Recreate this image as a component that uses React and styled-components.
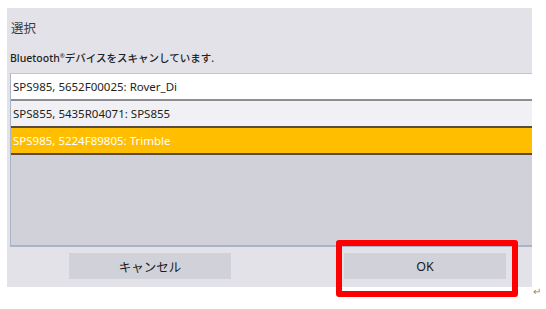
import React from "react";
import styled, { createGlobalStyle } from "styled-components";

const GlobalStyle = createGlobalStyle`
  html, body { margin: 0; padding: 0; background: #ffffff; }
  body { font-family: "Noto Sans", "Noto Sans CJK JP", sans-serif; }
`;

const Page = styled.div`
  position: relative;
  display: flex;
  align-items: flex-start;
  padding: 8px 0 0 7px;
  width: 546px;
  height: 309px;
  box-sizing: border-box;
`;

const Panel = styled.div`
  width: 525px;
  height: 279px;
  background: #e2e2e8;
  display: flex;
  flex-direction: column;
`;

const Title = styled.div`
  padding: 12px 0 0 4px;
  font-size: 12.5px;
  line-height: 17px;
  color: #3a3a3a;
`;

const Subtitle = styled.div`
  margin-top: 12px;
  padding-left: 3px;
  font-size: 10.5px;
  font-weight: 500;
  line-height: 15px;
  color: #222;
`;

const Sup = styled.sup`
  font-size: 6px;
  vertical-align: 4px;
`;

const List = styled.div`
  margin: 7px 0 0 3px;
  flex: 1;
  background: #d1d1d9;
  border-top: 1px solid #c4c4cc;
  border-left: 1px solid #a9b4c6;
  border-bottom: 2px solid #aab4c6;
  display: flex;
  flex-direction: column;
`;

const Row = styled.div`
  height: 25px;
  display: flex;
  align-items: center;
  padding-left: 2px;
  font-size: 11.5px;
  color: ${(p) => (p.$selected ? "#ffffff" : "#1e1e1e")};
  background: ${(p) => (p.$selected ? "#ffbe00" : p.$alt ? "#f1f1f5" : "#ffffff")};
  border-top: ${(p) => (p.$selected ? "2px solid #5a4c3c" : "0")};
  border-bottom: 2px solid ${(p) => (p.$selected ? "#5a4c3c" : "#8e8e92")};
  box-sizing: content-box;
  margin-top: ${(p) => (p.$selected ? "-2px" : "0")};
`;

const Footer = styled.div`
  height: 40px;
  display: flex;
  align-items: flex-start;
  padding: 6px 0 0 62px;
  gap: 113px;
  box-sizing: border-box;
`;

const Button = styled.div`
  width: 162px;
  height: 26px;
  background: #d1d1d9;
  display: flex;
  align-items: center;
  justify-content: center;
  font-size: 12.5px;
  color: #1a1a1a;
`;

const Highlight = styled.div`
  position: absolute;
  left: 336px;
  top: 240px;
  width: 182px;
  height: 57px;
  box-sizing: border-box;
  border: 6px solid #ff0000;
  border-radius: 3px;
`;

const ParaMark = styled.span`
  font-size: 10px;
  line-height: 10px;
  color: #888;
  margin: 278px 0 0 1px;
`;

export default function App() {
  return (
    <>
      <GlobalStyle />
      <Page>
        <Panel>
          <Title>選択</Title>
          <Subtitle>
            Bluetooth<Sup>®</Sup>デバイスをスキャンしています.
          </Subtitle>
          <List>
            <Row>SPS985, 5652F00025: Rover_Di</Row>
            <Row $alt>SPS855, 5435R04071: SPS855</Row>
            <Row $selected>SPS985, 5224F89805: Trimble</Row>
          </List>
          <Footer>
            <Button>キャンセル</Button>
            <Button>OK</Button>
          </Footer>
        </Panel>
        <ParaMark>↵</ParaMark>
        <Highlight />
      </Page>
    </>
  );
}
